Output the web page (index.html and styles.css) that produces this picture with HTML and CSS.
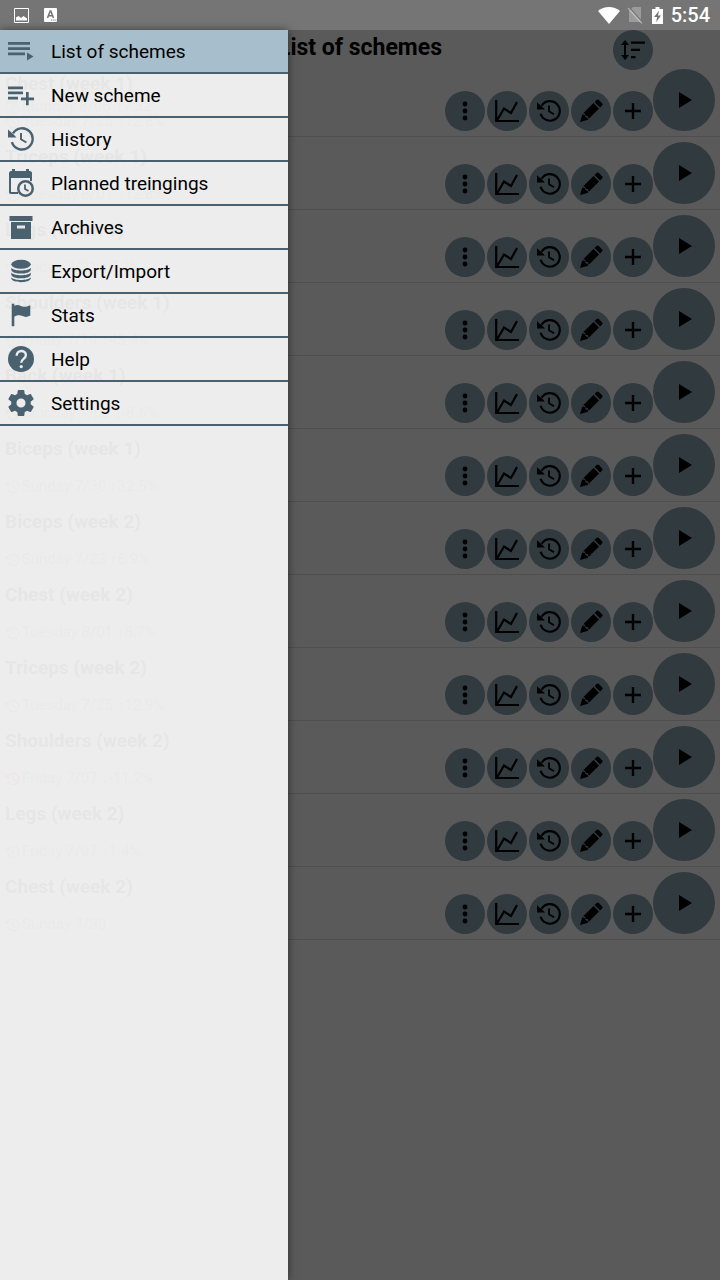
FILE: index.html
```html
<!DOCTYPE html>
<html lang="en">
<head>
  <meta charset="UTF-8">
  <meta name="viewport" content="width=device-width, initial-scale=1.0">
  <title>List of schemes</title>
  <link rel="stylesheet" href="styles.css">
</head>
<body>

  <!-- shared icons -->
  <svg class="sprite" aria-hidden="true">
    <symbol id="i-dots" viewBox="0 0 24 24"><circle cx="12" cy="5" r="2.400"/><circle cx="12" cy="12" r="2.400"/><circle cx="12" cy="19" r="2.400"/></symbol>
    <symbol id="i-chart" viewBox="0 0 24 24"><path d="M1.200 1v21H24M2 21.500L9 9.500l7 4.500 6-11" fill="none" stroke="currentColor" stroke-width="2.200"/></symbol>
    <symbol id="i-history" viewBox="0 0 24 24"><path d="M4.600 6.800A9.800 9.800 0 1 1 3.600 14.800" fill="none" stroke="currentColor" stroke-width="2.200"/><path d="M0 3.200v7.300h7.800L5.500 8z"/><path d="M12 6.500v5.700l5 3" fill="none" stroke="currentColor" stroke-width="1.800"/></symbol>
    <symbol id="i-pencil" viewBox="0 0 24 24"><path d="M1 23l2.200-7.600 2.600.6.8 2.200 2 .6.6 2zM4.200 14.200L14.500 4l5.500 5.500L9.800 19.800l-.9-2.500-2.300-.6-.5-2zM15.600 2.900l1.900-1.900c.7-.7 1.600-.7 2.300 0l3.200 3.200c.7.7.7 1.600 0 2.300l-1.900 1.900z"/></symbol>
    <symbol id="i-plus" viewBox="0 0 24 24"><path d="M12 4v16M4 12h16" fill="none" stroke="currentColor" stroke-width="2.400"/></symbol>
    <symbol id="i-play" viewBox="0 0 24 24"><path d="M7 4v16l13-8z"/></symbol>
    <symbol id="i-sort" viewBox="0 0 24 24"><path d="M4 2L0 7h3v10H0l4 5 4-5H5V7h3zM10 3.500h14v2.300H10zM10 10.800h9v2.300h-9zM10 18h4.500v2.300H10z"/></symbol>
    <symbol id="i-list" viewBox="0 0 26 24"><path d="M0 3h22v2.700H0zM0 8.300h22V11H0zM0 13.600h17v2.700H0zM19 13.500v8l6.500-4z"/></symbol>
    <symbol id="i-listadd" viewBox="0 0 26 24"><path d="M0 3.500h15v2.700H0zM0 8.600h15v2.700H0zM0 13.700h10v2.700H0zM18 9h2.700v5.500H26v2.700h-5.300v5H18v-5h-5v-2.700h5z"/></symbol>
    <symbol id="i-calendar" viewBox="0 0 26 28"><path fill-rule="evenodd" d="M4 0h3v2h11V0h3v2h1c1 0 2 1 2 2v8h-2V9H3v14h7v2H3c-1.500 0-2-1-2-2V4c0-1 1-2 2-2h1z"/><path fill-rule="evenodd" d="M17.500 11a8.500 8.500 0 1 0 0 17 8.500 8.500 0 0 0 0-17zm0 2.500a6 6 0 1 1 0 12 6 6 0 0 1 0-12z"/><path d="M17 15.500v4.500l3.500 2" fill="none" stroke="currentColor" stroke-width="1.800"/></symbol>
    <symbol id="i-archive" viewBox="-1 -1 26 26"><path fill-rule="evenodd" d="M.5 1h23v5H.5zM2 7h20v17H2zM8 10.500v3h8v-3z"/></symbol>
    <symbol id="i-database" viewBox="-3 -2 28 28"><ellipse cx="11" cy="4.800" rx="10.500" ry="4.800"/><path d="M.5 8.500c3 4 18 4 21 0v2.300c-1 5.200-20 5.200-21 0zM.5 13.700c3 4 18 4 21 0V16c-1 5.200-20 5.200-21 0zM.5 18.700c3 4 18 4 21 0v1.500c-1 5.200-20 5.200-21 0z"/></symbol>
    <symbol id="i-flag" viewBox="-3 -2 28 28"><path d="M1 0h2.800v2c5-2.500 7.500 1.500 11 1.200 2.500 0 4-1.200 6.200-1.700v11c-3 1.800-5.500 2-8.500.7-3-1.300-5.500-1-8.700.8v10H1z"/></symbol>
    <symbol id="i-help" viewBox="0 0 24 24"><circle cx="12" cy="12" r="12"/><path d="M8 9c0-6 8.500-5.500 8.500-.8 0 3.800-4.300 3.500-4.300 7.300" fill="none" stroke="#ececec" stroke-width="2.200"/><circle cx="12.200" cy="19" r="1.500" fill="#ececec"/></symbol>
    <symbol id="i-gear" viewBox="2 2 20 20"><path d="M19.430 12.980c.04-.32.070-.64.070-.98s-.03-.66-.07-.98l2.110-1.650c.19-.15.240-.42.120-.64l-2-3.460c-.12-.22-.39-.3-.61-.22l-2.490 1c-.52-.4-1.080-.73-1.690-.98l-.38-2.650C14.460 2.180 14.250 2 14 2h-4c-.25 0-.46.180-.49.420l-.38 2.650c-.61.250-1.170.590-1.690.980l-2.490-1c-.23-.09-.49 0-.61.220l-2 3.460c-.13.220-.07.490.120.640l2.110 1.650c-.04.320-.07.650-.07.980s.03.660.070.980l-2.110 1.650c-.19.150-.24.420-.12.640l2 3.460c.12.220.39.300.61.220l2.490-1c.52.400 1.080.730 1.690.980l.38 2.650c.03.240.24.420.49.420h4c.25 0 .46-.18.490-.42l.38-2.650c.61-.25 1.170-.59 1.690-.98l2.490 1c.23.090.49 0 .61-.22l2-3.460c.12-.22.070-.49-.12-.64zM12 15.500a3.500 3.500 0 1 1 0-7 3.500 3.500 0 0 1 0 7z"/></symbol>
  </svg>

  <div class="status-bar">
    <svg class="status-image" viewBox="0 0 15 15"><path d="M.5.500h14v14H.5z" fill="none" stroke="currentColor"/><path d="M2 12.500V9.500l2.500-1.500 2.500 2 2.500-2 3.500 2.500v2z"/></svg>
    <svg class="status-keyboard" viewBox="0 0 13 14"><rect width="13" height="14" rx="1"/><path d="M3.500 10l2.700-7h.6l2.700 7M4.500 7.700h4" fill="none" stroke="#757575" stroke-width="1.500"/><path d="M7 12h1.300M9.300 12h1.300M11.400 12h1" stroke="#757575"/></svg>
    <span class="spacer"></span>
    <svg class="status-wifi" viewBox="0 0 22 17"><path d="M11 17L0 4C6-1.300 16-1.300 22 4z"/></svg>
    <svg class="status-sim" viewBox="0 0 16 18"><path d="M6 1h8v15H2V5z" opacity=".28"/><path d="M2 1l14 16" fill="none" stroke="#757575" stroke-width="1.200"/><path d="M1 2l14 15.500" fill="none" stroke="currentColor" stroke-width="1.200" opacity=".4"/></svg>
    <svg class="status-battery" viewBox="0 0 11 17"><path d="M3.500 0h4v2H11v15H0V2h3.500z"/><path d="M7.200 3.500L2 10h3.200l-1.200 5.200L9 8.600H5.900z" fill="#757575"/></svg>
    <span class="clock">5:54</span>
  </div>

  <div class="screen">
    <main>
      <header class="page-header">
        <h1>List of schemes</h1>
        <button class="round" aria-label="Sort"><svg><use href="#i-sort"/></svg></button>
      </header>
      <ul class="schemes" id="schemes"></ul>
    </main>

    <div class="scrim"></div>

    <nav class="drawer">
      <a class="active" href="#list"><svg><use href="#i-list"/></svg>List of schemes</a>
      <a href="#new"><svg><use href="#i-listadd"/></svg>New scheme</a>
      <a href="#history"><svg><use href="#i-history"/></svg>History</a>
      <a href="#planned"><svg><use href="#i-calendar"/></svg>Planned treingings</a>
      <a href="#archives"><svg><use href="#i-archive"/></svg>Archives</a>
      <a href="#export"><svg><use href="#i-database"/></svg>Export/Import</a>
      <a href="#stats"><svg><use href="#i-flag"/></svg>Stats</a>
      <a href="#help"><svg><use href="#i-help"/></svg>Help</a>
      <a href="#settings"><svg><use href="#i-gear"/></svg>Settings</a>
    </nav>
  </div>

  <script src="script.js"></script>
</body>
</html>
```

FILE: styles.css
```css
* {
  box-sizing: border-box;
}

body {
  margin: 0;
  min-height: 100vh;
  display: flex;
  flex-direction: column;
  font-family: Roboto, sans-serif;
  color: #000;
  background-color: #e1e1e1;
}

svg {
  fill: currentColor;
  flex: none;
}

.sprite {
  position: absolute;
  width: 0;
  height: 0;
}

/* status bar */
.status-bar {
  display: flex;
  align-items: center;
  height: 30px;
  padding: 0 10px 0 14px;
  background-color: #757575;
  color: #fff;
}

.status-image {
  width: 15px;
  height: 15px;
  margin-right: 15px;
}

.status-keyboard {
  width: 13px;
  height: 14px;
}

.spacer {
  flex: 1;
}

.status-wifi {
  width: 22px;
  height: 17px;
  margin-right: 7px;
}

.status-sim {
  width: 16px;
  height: 18px;
  margin-right: 9px;
}

.status-battery {
  width: 11px;
  height: 17px;
  margin-right: 8px;
}

.clock {
  font-size: 20px;
  font-weight: 500;
  line-height: 30px;
}

/* page */
.screen {
  position: relative;
  flex: 1;
}

.page-header {
  display: grid;
  grid-template-columns: 1fr auto 1fr;
  align-items: start;
  height: 34px;
  padding: 0 67px;
}

.page-header h1 {
  grid-column: 2;
  margin: 0;
  font-size: 23px;
  line-height: 36px;
}

.page-header .round {
  justify-self: end;
}

.schemes {
  list-style: none;
  margin: 0;
  padding: 0;
}

.scheme {
  display: flex;
  justify-content: space-between;
  padding: 5px;
  border-bottom: 1px solid #c4c4c4;
}

.info {
  display: flex;
  flex-direction: column;
  justify-content: space-between;
  height: 62px;
  padding-bottom: 2px;
}

.info h2 {
  margin: 0;
  font-size: 19px;
  line-height: 30px;
}

.info p {
  display: flex;
  align-items: flex-end;
  margin: 0;
  font-size: 15px;
  line-height: 15px;
  color: #777;
}

.info p svg {
  width: 15px;
  height: 14px;
  margin-right: 2px;
}

.info p.down svg {
  color: #e00;
}

.actions {
  display: flex;
  align-items: flex-end;
}

.small {
  display: flex;
  gap: 2px;
}

.round {
  display: flex;
  align-items: center;
  justify-content: center;
  width: 40px;
  height: 40px;
  padding: 0;
  border: none;
  border-radius: 50%;
  background-color: #78919f;
  color: #000;
}

.round svg {
  width: 24px;
  height: 24px;
}

.play {
  width: 62px;
  height: 62px;
}

/* drawer */
.scrim {
  position: absolute;
  inset: 0;
  background-color: rgba(0, 0, 0, 0.6);
}

.drawer {
  position: absolute;
  top: 0;
  bottom: 0;
  left: 0;
  width: 40%;
  background-color: rgba(250, 250, 250, 0.92);
  box-shadow: 0 0 8px rgba(0, 0, 0, 0.5);
}

.drawer a {
  display: flex;
  align-items: center;
  gap: 17px;
  height: 44px;
  padding-left: 8px;
  border-bottom: 2px solid #4a626f;
  font-size: 19px;
  color: #000;
  text-decoration: none;
}

.drawer a.active {
  background-color: #a7bfcd;
}

.drawer svg {
  width: 26px;
  height: 28px;
  color: #4a626f;
}
```

FILE: script.js
```js
const schemes = [
  { name: 'Chest (week 1)', planned: 'Monday 8/06 17:32', last: 'Tuesday 7/25 ↑12.8%' },
  { name: 'Triceps (week 1)', last: 'Tuesday 8/01 ↑12.8%' },
  { name: 'Legs (week 1)', last: 'Friday 7/21 ↑7.2%' },
  { name: 'Shoulders (week 1)', last: 'Friday 7/14 ↑45.4%' },
  { name: 'Back (week 1)', last: 'Monday 7/03 ↓-8.6%', down: true },
  { name: 'Biceps (week 1)', last: 'Sunday 7/30 ↑32.5%' },
  { name: 'Biceps (week 2)', last: 'Sunday 7/23 ↑6.9%' },
  { name: 'Chest (week 2)', last: 'Tuesday 8/01 ↑8.7%' },
  { name: 'Triceps (week 2)', last: 'Tuesday 7/25 ↑12.9%' },
  { name: 'Shoulders (week 2)', last: 'Friday 7/07 ↓-11.2%', down: true },
  { name: 'Legs (week 2)', last: 'Friday 7/07 ↑1.4%' },
  { name: 'Chest (week 2)', last: 'Sunday 7/30' }
];

const icon = (id) => `<svg><use href="#i-${id}"/></svg>`;
const button = (id, label, cls = '') => `<button class="round ${cls}" aria-label="${label}">${icon(id)}</button>`;

document.getElementById('schemes').innerHTML = schemes.map((s) => `
  <li class="scheme">
    <div class="info">
      <h2>${s.name}</h2>
      <div>
        ${s.planned ? `<p>${icon('calendar')}${s.planned}</p>` : ''}
        <p class="${s.down ? 'down' : ''}">${icon('history')}${s.last}</p>
      </div>
    </div>
    <div class="actions">
      <div class="small">
        ${button('dots', 'More')}
        ${button('chart', 'Chart')}
        ${button('history', 'History')}
        ${button('pencil', 'Edit')}
        ${button('plus', 'Add')}
      </div>
      ${button('play', 'Start', 'play')}
    </div>
  </li>`).join('');
```
